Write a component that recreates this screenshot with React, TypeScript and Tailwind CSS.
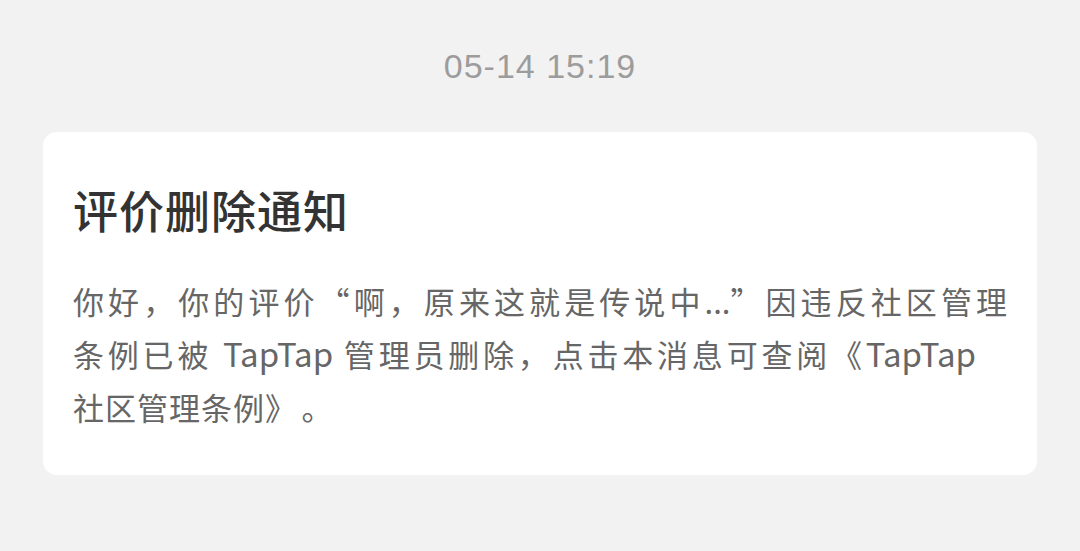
export default function App() {
  return (
    <main
      className="min-h-screen w-full bg-[#f2f2f2] px-[43px] pt-[46px]"
      style={{ fontFamily: '"Noto Sans CJK SC", "Noto Sans", sans-serif' }}
    >
      <div
        className="text-center text-[34px] leading-[40px] tracking-[1px] text-[#9c9c9c]"
        style={{ fontFamily: '"Liberation Sans", "Noto Sans CJK SC", sans-serif' }}
      >
        05-14 15:19
      </div>

      <div className="mt-[46px] rounded-[14px] bg-white px-[30px] pt-[48px] pb-[42px]">
        <h1 className="text-[45px] font-medium leading-[60px] tracking-[1px] text-[#333333]">评价删除通知</h1>
        <div className="mt-[34px] text-[31px] leading-[53px] text-[#666666]">
          <p className="[text-align-last:justify]">你好，你的评价“啊，原来这就是传说中...”因违反社区管理</p>
          <p className="w-[903px] [text-align-last:justify]">
            条例已被 <span className="text-[33px]">TapTap</span> 管理员删除，点击本消息可查阅《<span className="text-[33px]">TapTap</span>
          </p>
          <p className="tracking-[1px]">
            社区管理条例》<span className="ml-[20px]">。</span>
          </p>
        </div>
      </div>
    </main>
  );
}
